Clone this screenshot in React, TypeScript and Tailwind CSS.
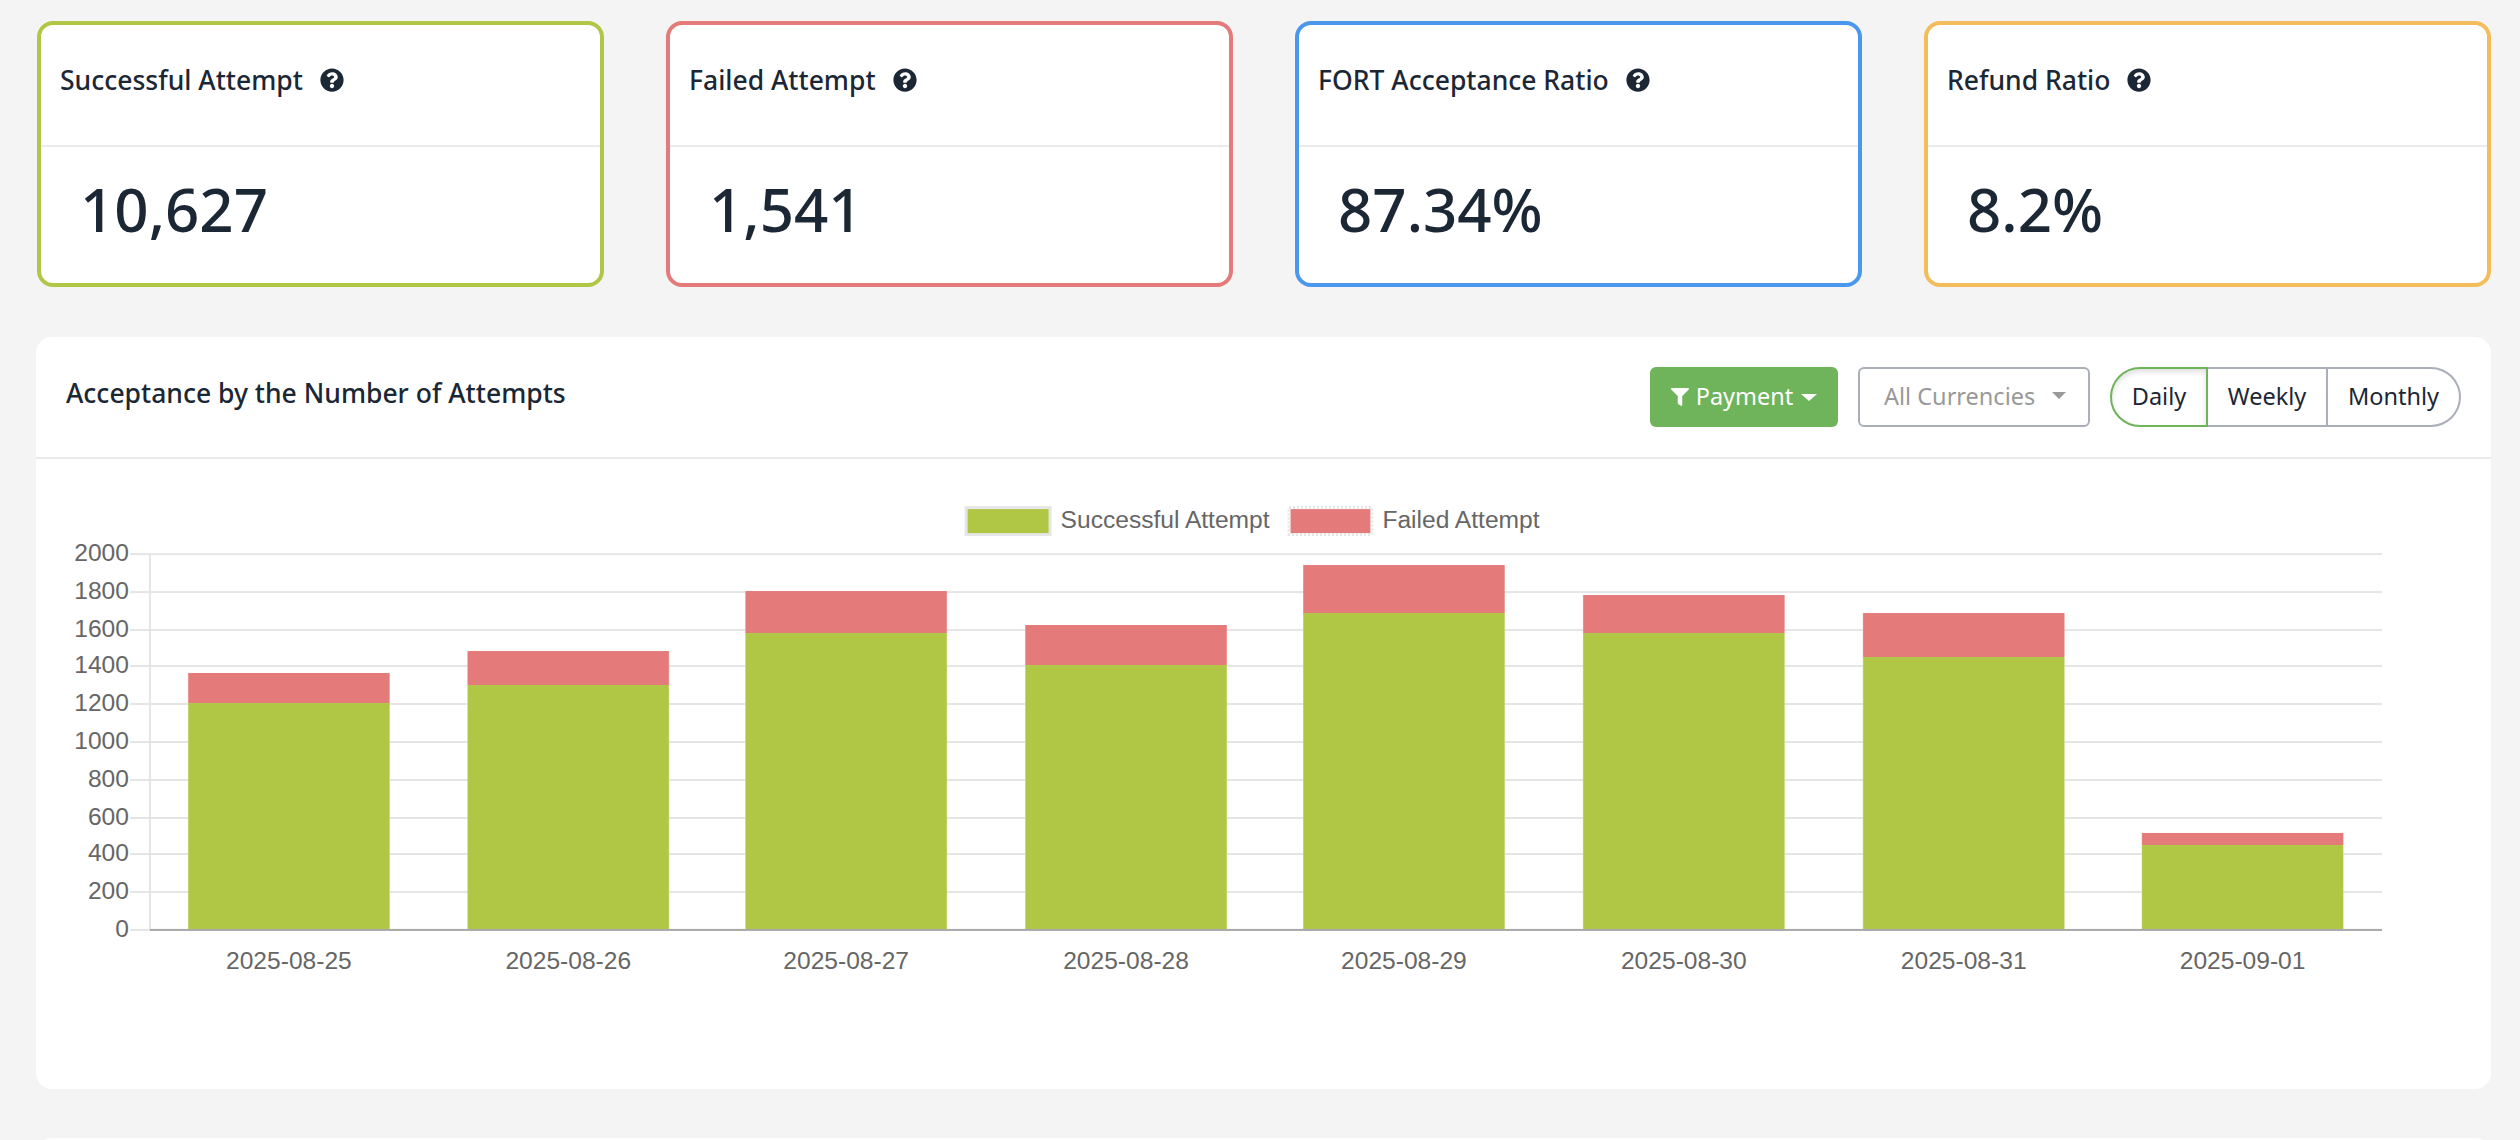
import React from 'react';
import { FaQuestionCircle, FaFilter } from 'react-icons/fa';

const cards = [
  { title: 'Successful Attempt', value: '10,627', border: 'border-[#b0c745]' },
  { title: 'Failed Attempt', value: '1,541', border: 'border-[#e47a7a]' },
  { title: 'FORT Acceptance Ratio', value: '87.34%', border: 'border-[#4a98ee]' },
  { title: 'Refund Ratio', value: '8.2%', border: 'border-[#f3bd5b]' },
];

// chart coordinates are page pixels, see the viewBox below
const gridLines = [
  { label: '2000', y: 554 },
  { label: '1800', y: 592 },
  { label: '1600', y: 630 },
  { label: '1400', y: 666 },
  { label: '1200', y: 704 },
  { label: '1000', y: 742 },
  { label: '800', y: 780 },
  { label: '600', y: 818 },
  { label: '400', y: 854 },
  { label: '200', y: 892 },
  { label: '0', y: 930 },
];

const bars = [
  { date: '2025-08-25', x: 188.5, success: 1207, failed: 160 },
  { date: '2025-08-26', x: 468, success: 1303, failed: 181 },
  { date: '2025-08-27', x: 746, success: 1580, failed: 223 },
  { date: '2025-08-28', x: 1026, success: 1410, failed: 212 },
  { date: '2025-08-29', x: 1304, success: 1686, failed: 255 },
  { date: '2025-08-30', x: 1584, success: 1580, failed: 202 },
  { date: '2025-08-31', x: 1864, success: 1452, failed: 234 },
  { date: '2025-09-01', x: 2143, success: 452, failed: 64 },
];

const BASE_Y = 930;
const PX_PER_UNIT = 0.188;
const BAR_WIDTH = 201;
const chartFont = { fontFamily: '"Liberation Sans", Arial, sans-serif', fontSize: 24.6 };

function AttemptsChart() {
  return (
    <svg viewBox="36 459 2456 630" className="block w-full h-[630px]" style={chartFont}>
      {/* Legend */}
      <rect x="966.5" y="507.5" width="84" height="27" fill="#b0c745" stroke="#e6e6e6" strokeWidth="3" />
      <text x="1061" y="528" fill="#666666">Successful Attempt</text>
      <rect x="1291" y="509" width="80" height="24" fill="#e47a7a" />
      <rect x="1289.5" y="507.5" width="83" height="27" fill="none" stroke="#e6e6e6" strokeWidth="3" strokeDasharray="2 2" />
      <text x="1383" y="528" fill="#666666">Failed Attempt</text>

      {/* Grid */}
      {gridLines.map((line) => (
        <g key={line.label}>
          <rect x="130" y={line.y - 1} width="2253" height="2" fill="#e5e5e5" />
          <text x="129" y={line.y + 7} textAnchor="end" fill="#666666">{line.label}</text>
        </g>
      ))}
      <rect x="149" y="554" width="2" height="376" fill="#e5e5e5" />

      {/* Bars */}
      {bars.map((bar) => {
        const splitY = Math.round(BASE_Y - bar.success * PX_PER_UNIT);
        const topY = Math.round(BASE_Y - (bar.success + bar.failed) * PX_PER_UNIT);
        return (
          <g key={bar.date}>
            <rect x={bar.x - 0.5} y={topY} width={BAR_WIDTH + 1} height={splitY - topY} fill="#f0b5b5" />
            <rect x={bar.x - 0.5} y={splitY} width={BAR_WIDTH + 1} height={BASE_Y - splitY} fill="#d6e29e" />
            <rect x={bar.x} y={topY} width={BAR_WIDTH} height={splitY - topY} fill="#e47a7a" />
            <rect x={bar.x} y={splitY} width={BAR_WIDTH} height={BASE_Y - splitY} fill="#b0c745" />
            <text x={bar.x + BAR_WIDTH / 2} y="969" textAnchor="middle" fill="#666666">{bar.date}</text>
          </g>
        );
      })}
      <rect x="150" y="929" width="2233" height="2" fill="#a9a9a9" />
    </svg>
  );
}

export default function App() {
  return (
    <div className="h-[1140px] overflow-hidden bg-[#f4f4f4] pt-[21px] pl-[37px] pr-[29px] font-['Noto_Sans',sans-serif] text-[#1c2735]">
      {/* Stat cards */}
      <div className="grid grid-cols-4 gap-[62px]">
        {cards.map((card) => (
          <div key={card.title} className={`bg-white border-4 rounded-[16px] h-[266px] ${card.border}`}>
            <div className="h-[122px] border-b-2 border-[#ebebeb] flex items-center gap-[17px] pl-[19px] pb-[10px]">
              <span className="text-[26.5px] leading-[36px] font-medium">{card.title}</span>
              <FaQuestionCircle className="w-[24px] h-[24px]" />
            </div>
            <div className="pl-[39px] pt-[26px] text-[60px] leading-[72px] font-medium">{card.value}</div>
          </div>
        ))}
      </div>

      {/* Acceptance panel */}
      <div className="mt-[50px] -ml-px bg-white rounded-[16px] h-[752px]">
        <div className="h-[122px] border-b-2 border-[#ebebeb] flex items-center justify-between pl-[30px] pr-[30px]">
          <h2 className="text-[26.5px] leading-[36px] font-medium pb-[9px]">Acceptance by the Number of Attempts</h2>
          <div className="flex items-center gap-[20px]">
            <button className="w-[188px] h-[60px] bg-[#6fb35a] rounded-[6px] text-white text-[23.5px] flex items-center justify-center gap-[7px]">
              <FaFilter className="w-[18px] h-[18px]" />
              <span>Payment</span>
              <span className="w-0 h-0 ml-[1px] border-x-[8px] border-x-transparent border-t-[7px] border-t-white" />
            </button>
            <button className="w-[232px] h-[60px] border-2 border-[#a9aeb9] rounded-[6px] bg-white text-[#999999] text-[23.5px] flex items-center pl-[24px] gap-[17px]">
              <span>All Currencies</span>
              <span className="w-0 h-0 mb-[4px] border-x-[7px] border-x-transparent border-t-[7px] border-t-[#999999]" />
            </button>
            <div className="flex h-[60px] text-[23.5px]">
              <button className="w-[98px] border-2 border-[#6fb35a] rounded-l-full shadow-[inset_0_3px_5px_rgba(0,0,0,0.125)]">Daily</button>
              <button className="w-[120px] border-y-2 border-r-2 border-[#a9aeb9]">Weekly</button>
              <button className="w-[133px] border-y-2 border-r-2 border-[#a9aeb9] rounded-r-full">Monthly</button>
            </div>
          </div>
        </div>
        <AttemptsChart />
      </div>

      {/* Next panel, cut off by the window */}
      <div className="mt-[49px] -ml-px bg-white rounded-t-[16px] h-[40px]" />
    </div>
  );
}
